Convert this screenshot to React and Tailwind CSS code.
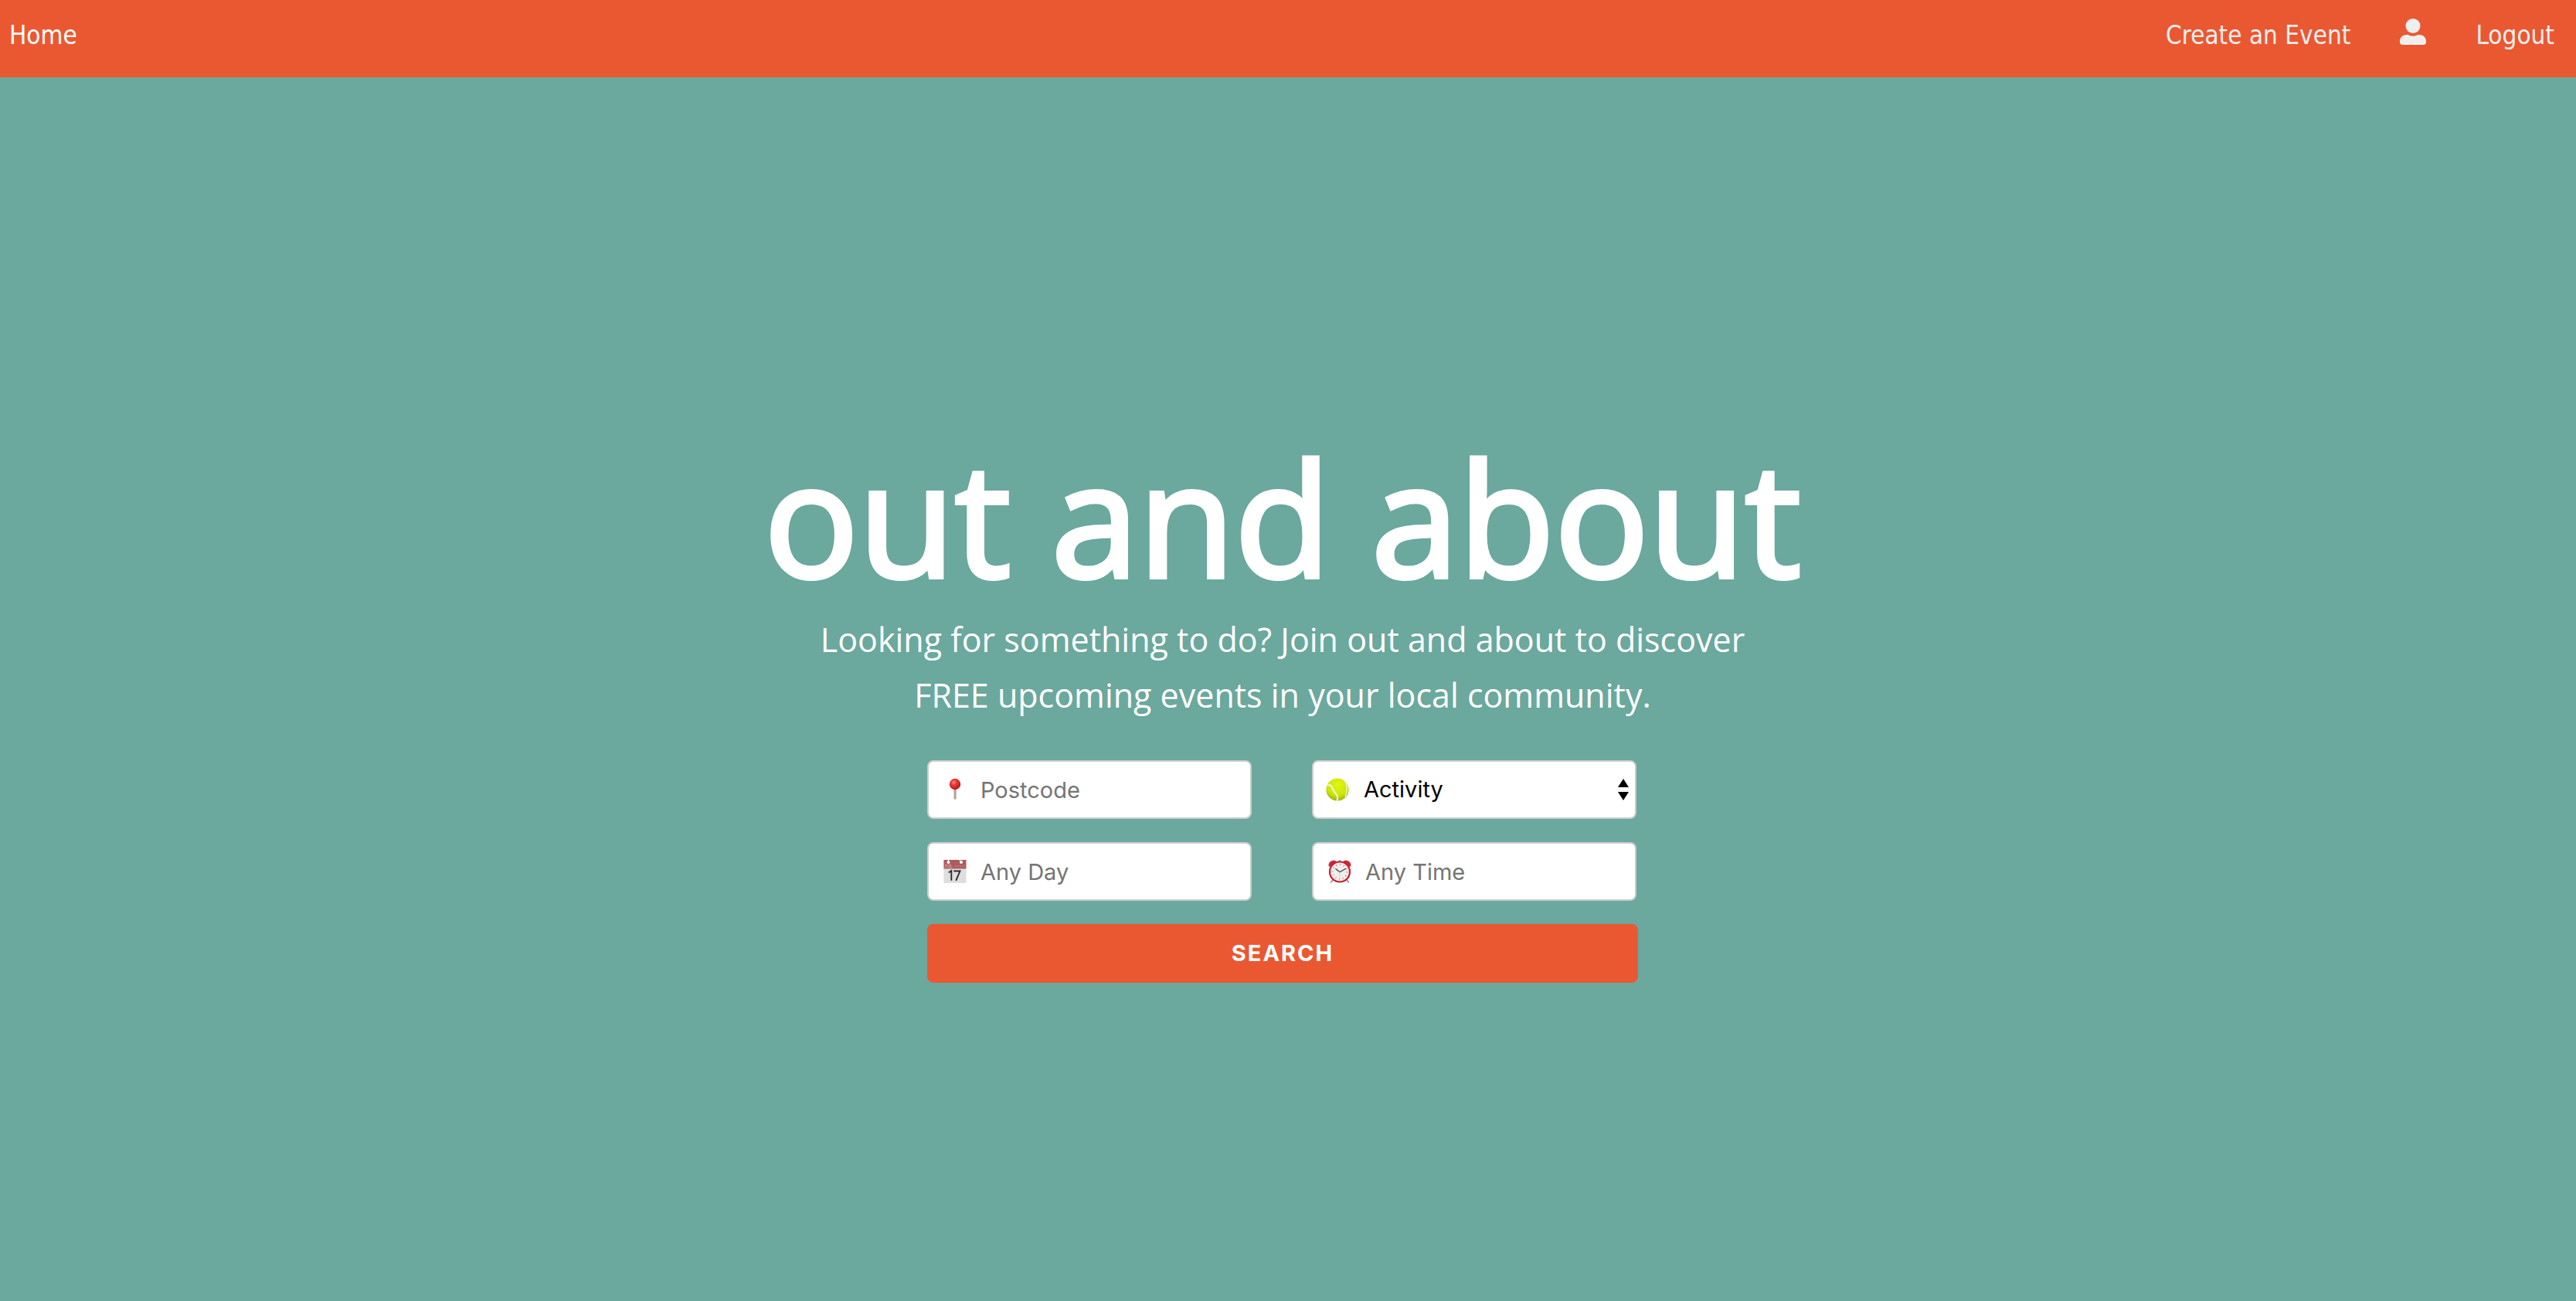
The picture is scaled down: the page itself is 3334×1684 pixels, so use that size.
function UserIcon() {
  return (
    <svg viewBox="0 0 34 34" className="size-[34px]" fill="currentColor" aria-hidden="true">
      <circle cx="17" cy="9.5" r="9.5" />
      <path d="M0 30.5V29.5C0 24 4 21 9 21h1.8c1.6 1 3.800 1.700 6.200 1.700s4.600-.7 6.200-1.700H25c5 0 9 3 9 8.500v1c0 2.200-1.300 3.500-3.200 3.500H3.200C1.300 34 0 32.700 0 30.500Z" />
    </svg>
  );
}

function PinIcon() {
  return (
    <svg viewBox="0 0 30 30" className="size-[30px]" aria-hidden="true">
      <defs>
        <radialGradient id="pinHead" cx="0.4" cy="0.35" r="0.7">
          <stop offset="0" stopColor="#ff8a7c" />
          <stop offset="0.35" stopColor="#ee3a35" />
          <stop offset="1" stopColor="#a81018" />
        </radialGradient>
      </defs>
      <rect x="13.700" y="12" width="2.800" height="15.500" rx="1" fill="#9a8278" />
      <rect x="14.600" y="14" width="1" height="13" fill="#d0c0b8" />
      <circle cx="15" cy="8" r="7.200" fill="url(#pinHead)" />
    </svg>
  );
}

function CalendarIcon() {
  return (
    <svg viewBox="0 0 30 30" className="size-[30px]" aria-hidden="true">
      <rect x="0.500" y="0" width="29" height="30" fill="#dedede" />
      <rect x="0.500" y="0" width="29" height="11.500" fill="#ad5c5e" />
      <circle cx="6.500" cy="3" r="2" fill="#fff" />
      <circle cx="23" cy="3" r="2" fill="#fff" />
      <path d="M6.500 0v3M21 0l2 3" stroke="#fff" strokeWidth="1" />
      <path d="M3 5.500v3.500q0 1-1.500 1M5 5.500v3q0 1.500 1.300 1.500t1.300-1.500v-3M9.300 5.500V10h2.500" fill="none" stroke="#d9aaaa" strokeWidth="0.900" />
      <path d="M15 8h13" stroke="#bb7273" strokeWidth="2.500" strokeDasharray="1.500 0.700" />
      <path d="M6.800 16.500 10.300 14v12.800M13.300 14.500h8.200L16.300 26.800" fill="none" stroke="#2b2b2b" strokeWidth="1.900" />
    </svg>
  );
}

function BallIcon() {
  return (
    <svg viewBox="0 0 30 30" className="size-[30px]" aria-hidden="true">
      <defs>
        <radialGradient id="ballFill" cx="0.5" cy="0.3" r="0.75">
          <stop offset="0" stopColor="#e0f70e" />
          <stop offset="0.6" stopColor="#cde60c" />
          <stop offset="1" stopColor="#92aa0a" />
        </radialGradient>
        <clipPath id="ballClip">
          <circle cx="15" cy="15" r="14.600" />
        </clipPath>
      </defs>
      <circle cx="15" cy="15" r="14.600" fill="url(#ballFill)" />
      <g clipPath="url(#ballClip)" fill="none" stroke="#f0f3d8">
        <path d="M2 9.500C6 8 8 11 9 14.500s5 5.500 6 9c.5 2.500 0 4.500-.5 6.500" strokeWidth="2.200" />
        <path d="M23.500 2.500c4.500 5 5 14 1.500 22" strokeWidth="1.500" />
      </g>
    </svg>
  );
}

function ClockIcon() {
  return (
    <svg viewBox="0 0 30 30" className="size-[30px]" aria-hidden="true">
      <path d="M6.500 25.500 3.500 29M23.500 25.500l3 3.500" stroke="#8b8b8b" strokeWidth="1.600" strokeLinecap="round" />
      <path d="M13.500 0.500h3V3h-3z" fill="#8d8589" />
      <path d="M0.800 8.500C-.5 4 3.500.3 8 .8c1.500.2 2.500.9 2.800 2L2.500 8.800ZM29.200 8.500C30.500 4 26.500.3 22 .8c-1.500.2-2.500.9-2.800 2l8.300 6Z" fill="#cc2936" />
      <circle cx="15" cy="15.500" r="13" fill="#eeeeec" stroke="#c51f2e" strokeWidth="2.200" />
      <circle cx="15" cy="15.500" r="9.300" fill="none" stroke="#e48088" strokeWidth="2.600" strokeDasharray="0.900 3.970" />
      <path d="m9.500 11.500 5.500 4.200 8-4.500" fill="none" stroke="#3c3c3c" strokeWidth="1.200" />
      <path d="M15 15.500V22" stroke="#d8c9a8" strokeWidth="0.900" />
    </svg>
  );
}

const fieldClass =
  "h-[76px] w-full appearance-none rounded-lg border-2 border-[#cccccc] bg-white pr-4 text-[29px] outline-none placeholder:text-[#757575]";

export default function App() {
  return (
    <div className="flex min-h-screen flex-col bg-[#6ba89d] font-['Open_Sans',sans-serif] text-white">
      <header className="h-[100px] bg-[#ea5831]">
        <nav className="flex items-start justify-between pt-6 pr-7 pl-3 font-['DejaVu_Sans_Condensed','DejaVu_Sans',sans-serif] text-[33px] leading-[44px]">
          <a href="#home">Home</a>
          <div className="flex items-start gap-16 text-[#efefef]">
            <a href="#create">Create an Event</a>
            <a href="#profile" aria-label="Profile">
              <UserIcon />
            </a>
            <a href="#logout">Logout</a>
          </div>
        </nav>
      </header>

      <main className="flex flex-1 flex-col items-center justify-center pt-9 pr-3.5">
        <h1 className="text-center text-[203px] leading-[240px] font-normal [-webkit-text-stroke:6px_white]">
          out and about
        </h1>
        <p className="mt-1 text-center text-[43px] leading-[72px]">
          Looking for something to do? Join out and about to discover
          <br />
          FREE upcoming events in your local community.
        </p>

        <form
          className="mt-12 w-full max-w-[920px] font-[Inter,sans-serif]"
          onSubmit={(e) => e.preventDefault()}
        >
          <div className="grid grid-cols-2 gap-x-[78px] gap-y-[30px] pr-0.5">
            <label className="relative block">
              <input type="text" aria-label="Postcode" placeholder="Postcode" className={`${fieldClass} pl-[67px]`} />
              <span className="pointer-events-none absolute inset-y-0 left-[21px] flex items-center">
                <PinIcon />
              </span>
            </label>
            <label className="relative block">
              <select aria-label="Activity" className={`${fieldClass} pl-[65px] text-black`}>
                <option>Activity</option>
              </select>
              <span className="pointer-events-none absolute inset-y-0 left-[18px] flex items-center">
                <BallIcon />
              </span>
              <span className="pointer-events-none absolute inset-y-0 right-2.5 flex items-center">
                <svg viewBox="0 0 14 28" className="h-7 w-3.5" aria-hidden="true">
                  <path d="M7 0l7 11H0zM7 28l7-11H0z" fill="#000" />
                </svg>
              </span>
            </label>
            <label className="relative block">
              <input type="text" aria-label="Day" placeholder="Any Day" className={`${fieldClass} pl-[67px]`} />
              <span className="pointer-events-none absolute inset-y-0 left-[21px] flex items-center">
                <CalendarIcon />
              </span>
            </label>
            <label className="relative block">
              <input type="text" aria-label="Time" placeholder="Any Time" className={`${fieldClass} pl-[67px]`} />
              <span className="pointer-events-none absolute inset-y-0 left-[21px] flex items-center">
                <ClockIcon />
              </span>
            </label>
          </div>
          <button
            type="submit"
            className="mt-[30px] h-[76px] w-full rounded-lg bg-[#ea5831] text-[29px] font-bold tracking-[2px]"
          >
            SEARCH
          </button>
        </form>
      </main>
    </div>
  );
}
